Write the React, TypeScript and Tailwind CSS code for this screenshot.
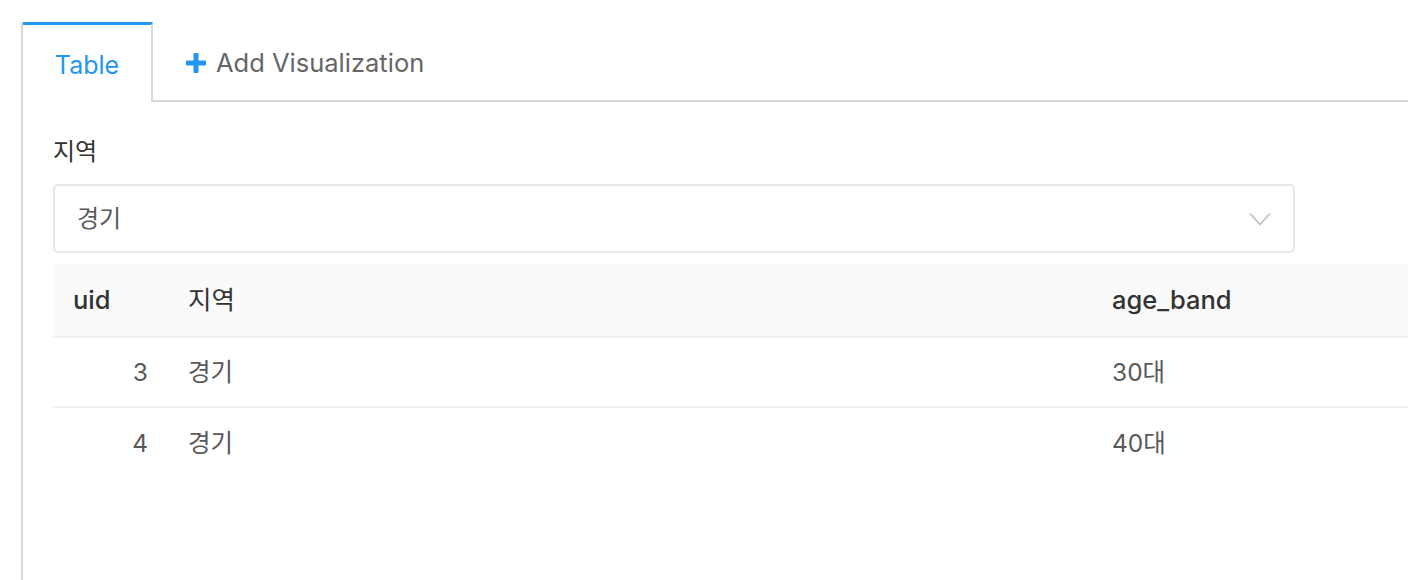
import React from "react";

const font = { fontFamily: 'Inter, "Noto Sans CJK KR", sans-serif' };

export default function App() {
  const rows = [
    { uid: 3, region: "경기", age: "30대" },
    { uid: 4, region: "경기", age: "40대" },
  ];
  return (
    <div className="w-[1408px] h-[580px] overflow-hidden bg-white pt-[22px] pl-[21px]" style={font}>
      <div className="w-[1500px] h-[600px] border-l-2 border-[#d9d9d9] flex flex-col">
        <div className="flex h-[80px]">
          <div className="w-[130px] h-full border-t-[3px] border-t-[#2196f3] border-r-2 border-r-[#d9d9d9] flex items-center justify-center text-[25px] text-[#2196f3] pt-[4px]">
            Table
          </div>
          <div className="flex-1 h-full border-b-2 border-[#d9d9d9] flex items-center pl-[33px] text-[25.5px] text-[#666666] pt-[4px]">
            <svg width="20" height="20" viewBox="0 0 20 20" className="mr-[10px]">
              <rect x="7.5" y="0" width="5" height="20" rx="1" fill="#2196f3" />
              <rect x="0" y="7.5" width="20" height="5" rx="1" fill="#2196f3" />
            </svg>
            Add Visualization
          </div>
        </div>
        <div className="pl-[30px] pt-[34px] flex flex-col">
          <div className="text-[24px] leading-[32px] text-[#333333]">지역</div>
          <div className="mt-[16px] w-[1242px] h-[69px] border-2 border-[#e8e8e8] rounded-[5px] flex items-center justify-between pl-[22px] pr-[22px]">
            <span className="text-[24px] text-[#595959]">경기</span>
            <svg width="22" height="14" viewBox="0 0 22 14" fill="none">
              <path d="M1 1.5 L11 12.5 L21 1.5" stroke="#bfbfbf" strokeWidth="1.6" />
            </svg>
          </div>
          <div className="mt-[11px] w-[1400px] flex flex-col">
            <div className="flex h-[74px] bg-[#fafafa] border-b-2 border-[#f0f0f0] items-center text-[25.5px] text-[#333333]">
              <div className="w-[115px] pl-[20px] font-medium">uid</div>
              <div className="w-[924px] pl-[20px]">지역</div>
              <div className="flex-1 pl-[20px] font-medium">age_band</div>
            </div>
            {rows.map((r, i) => (
              <div
                key={r.uid}
                className={
                  i < rows.length - 1
                    ? "flex h-[70px] border-b-2 border-[#f0f0f0] items-center text-[24.5px] text-[#595959]"
                    : "flex h-[70px] items-center text-[24.5px] text-[#595959]"
                }
              >
                <div className="w-[115px] pr-[20px] text-right">{r.uid}</div>
                <div className="w-[924px] pl-[20px]">{r.region}</div>
                <div className="flex-1 pl-[20px]">{r.age}</div>
              </div>
            ))}
          </div>
        </div>
      </div>
    </div>
  );
}
